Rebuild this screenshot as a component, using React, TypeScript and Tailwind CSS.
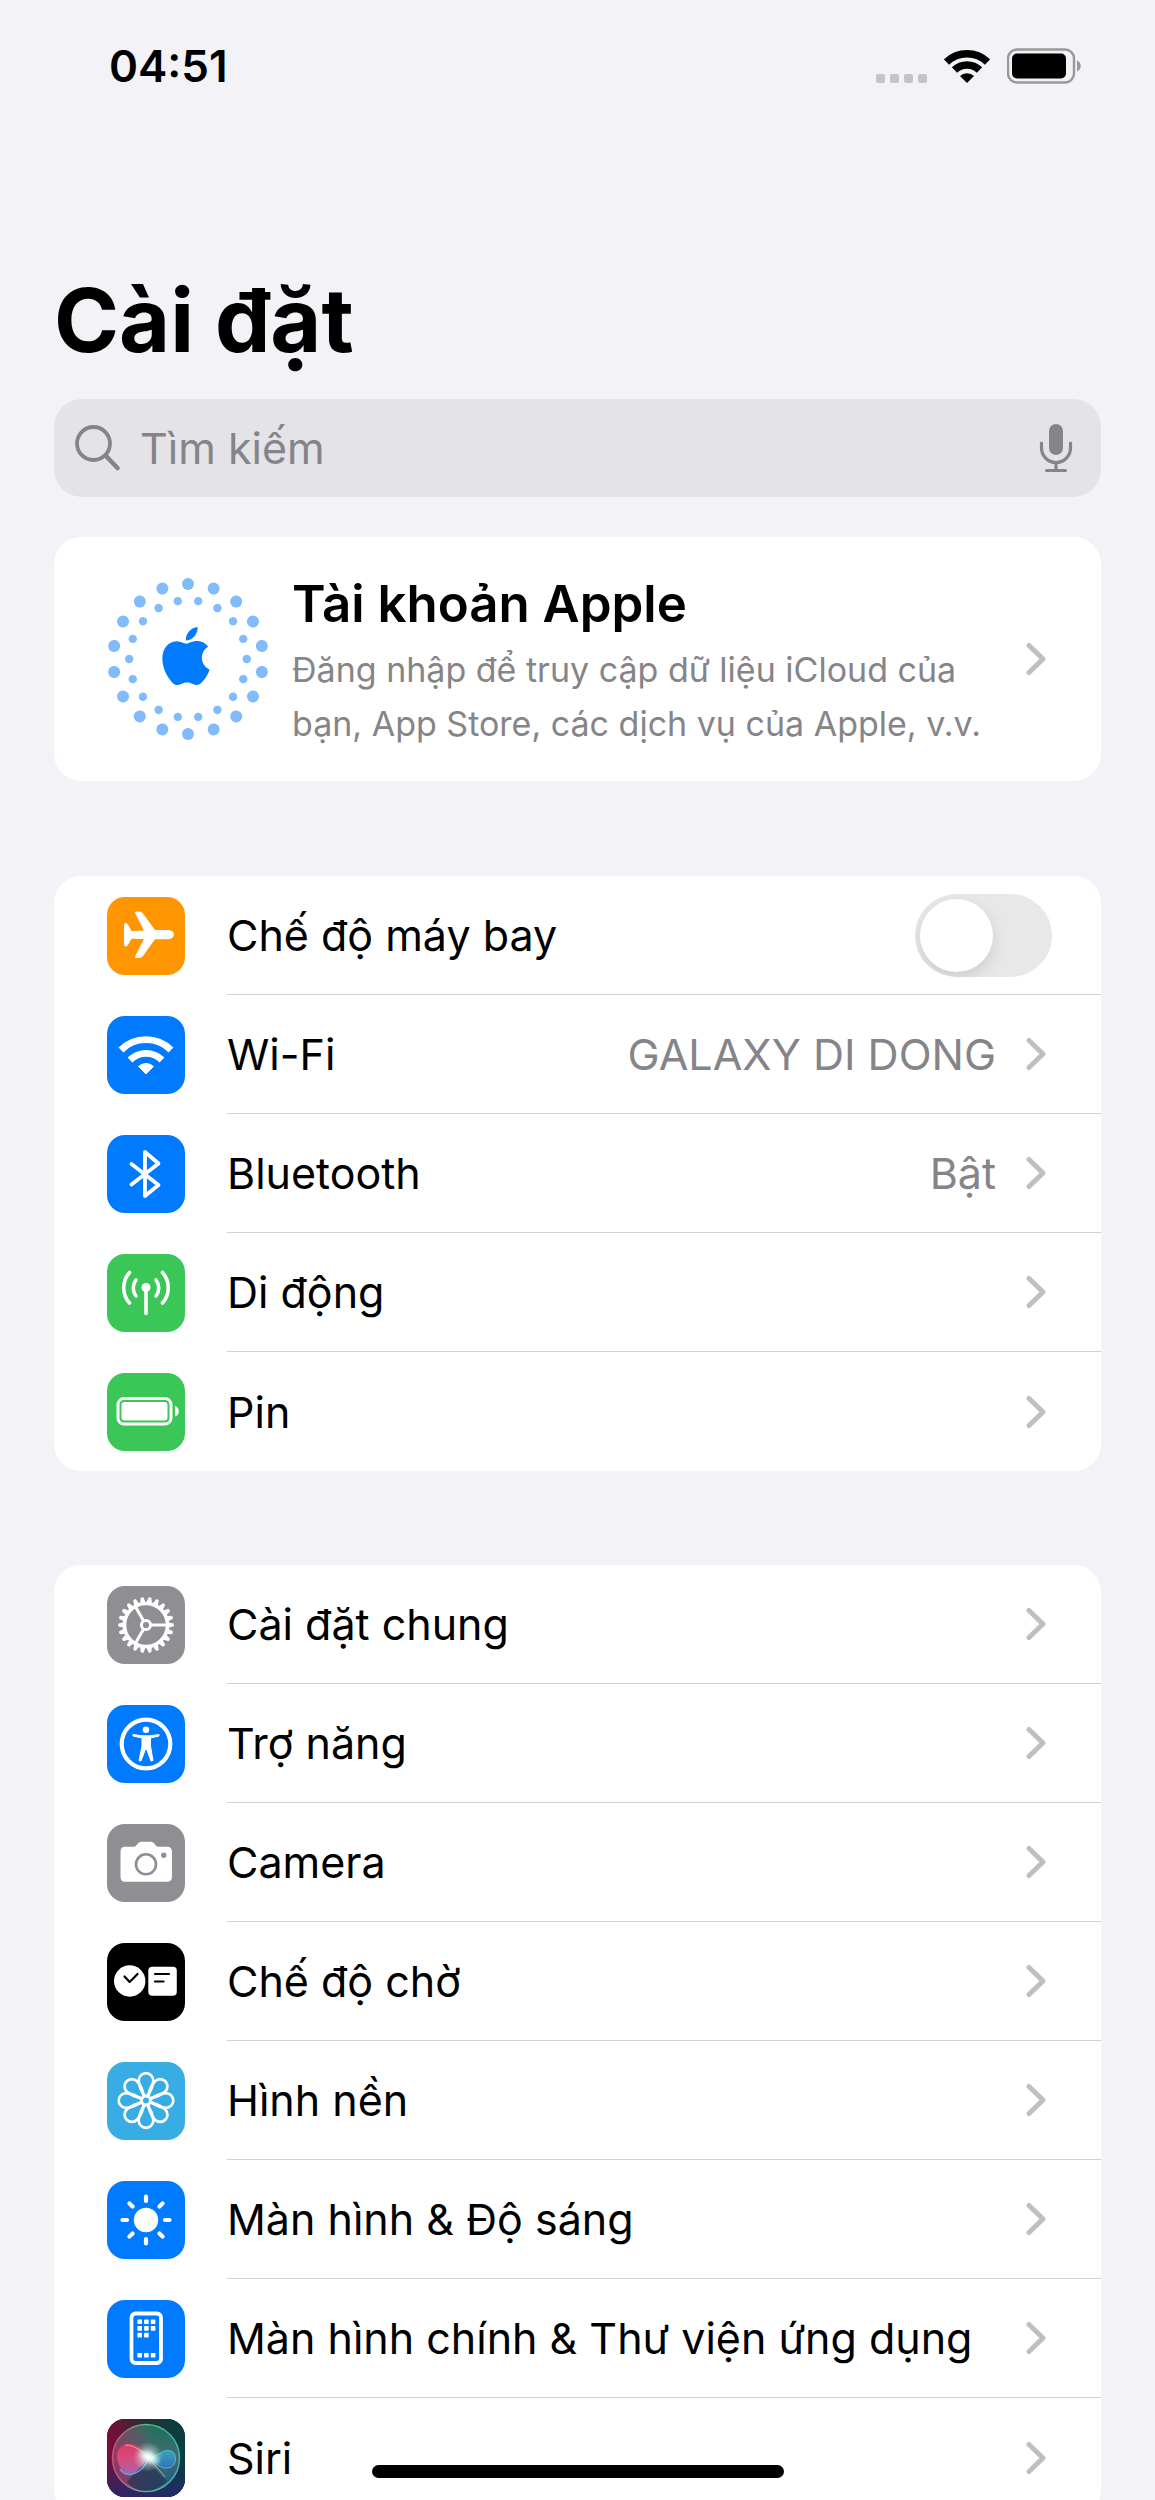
import { useState } from "react";
import type { ReactNode } from "react";
import { SiApple } from "react-icons/si";

type Item = {
  label: string;
  icon: ReactNode;
  color: string;
  value?: string;
  href: string;
};

const GEAR_TEETH = Array.from({ length: 22 }, (_, i) => (i * 360) / 22);
const PETALS = Array.from({ length: 8 }, (_, i) => i * 45);
const RING = Array.from({ length: 18 }, (_, i) => i * 20);

function Glyph({ children }: { children: ReactNode }) {
  return (
    <svg viewBox="0 0 78 78" className="size-full" fill="none" aria-hidden="true">
      {children}
    </svg>
  );
}

function PlaneIcon() {
  return (
    <Glyph>
      <path
        fill="#fff"
        d="M62 33H48L36 16.5Q34.500 14.500 32 14.500H29.500Q27.500 14.500 28.300 16.500L37 33.500L24.500 34L21 27.500Q20 26 18.500 26Q17 26 17 28V47.500Q17 49.500 18.500 49.500Q20 49.500 21 48L24.500 41.800L37 42L28.300 59Q27.500 61 29.500 61H32Q34.500 61 36 59L48 42.300H62Q67 41 67 37.600Q67 34 62 33Z"
      />
    </Glyph>
  );
}

function WifiIcon() {
  return (
    <Glyph>
      <g stroke="#fff" strokeWidth="6.8">
        <path d="M14 34A35.500 35.500 0 0 1 64 34" />
        <path d="M23 44A22.500 22.500 0 0 1 55 44" />
      </g>
      <path fill="#fff" stroke="#fff" strokeLinejoin="round" d="M39 58L31.500 50.500A11 11 0 0 1 46.500 50.500Z" />
    </Glyph>
  );
}

function BluetoothIcon() {
  return (
    <Glyph>
      <path
        stroke="#fff"
        strokeWidth="3.8"
        strokeLinecap="round"
        strokeLinejoin="round"
        d="M24.500 29L51.500 50L38 61V17L51.500 28.500L24.500 49.500"
      />
    </Glyph>
  );
}

function CellularIcon() {
  return (
    <Glyph>
      <g stroke="#fff" strokeWidth="3.6" strokeLinecap="round">
        <path d="M39 34V59.500" />
        <path d="M29 26A13 13 0 0 0 29 42" />
        <path d="M49 26A13 13 0 0 1 49 42" />
        <path d="M22.500 18.500A23 23 0 0 0 22.500 49" />
        <path d="M55.500 18.500A23 23 0 0 1 55.500 49" />
      </g>
      <circle cx="39" cy="33.500" r="4.500" fill="#fff" />
    </Glyph>
  );
}

function BatteryIcon() {
  return (
    <Glyph>
      <rect x="11" y="25.500" width="53" height="25.500" rx="6" stroke="#fff" strokeWidth="3" />
      <rect x="14.500" y="29" width="46" height="18.500" rx="3" fill="#fff" />
      <path fill="#fff" d="M68 33C73 34.500 73 42 68 43.500Z" />
    </Glyph>
  );
}

function GearIcon() {
  return (
    <Glyph>
      <g transform="translate(39 39)" stroke="#fff">
        {GEAR_TEETH.map((angle) => (
          <path key={angle} transform={`rotate(${angle})`} fill="#fff" stroke="none" d="M21 -3L27.500 -1.500Q28.500 0 27.500 1.500L21 3Z" />
        ))}
        <circle r="21.500" strokeWidth="3.600" />
        <circle r="4.600" strokeWidth="3" />
        {[0, 120, 240].map((angle) => (
          <path key={angle} transform={`rotate(${angle})`} strokeWidth="3" d="M5 0H21" />
        ))}
      </g>
    </Glyph>
  );
}

function AccessibilityIcon() {
  return (
    <Glyph>
      <circle cx="39" cy="39" r="24.300" stroke="#fff" strokeWidth="4.200" />
      <circle cx="39" cy="24.800" r="3.300" fill="#fff" />
      <path
        fill="#fff"
        stroke="#fff"
        strokeLinejoin="round"
        d="M26 29.500L35 30.800H43L52 29.500V31L43.500 33V41L46 55.500L44 56L39.500 44H38.500L34 56L32 55.500L35 41V33L26 31Z"
      />
    </Glyph>
  );
}

function CameraIcon() {
  return (
    <Glyph>
      <path
        fill="#fff"
        d="M18 22.700H27Q29 22.500 30 20.500Q31.500 17.700 34 17.700H44Q46.500 17.700 48 20.500Q49 22.500 51 22.700H60Q65 22.700 65 27.500V53Q65 57.700 60 57.700H18Q13.500 57.700 13.500 53V27.500Q13.500 22.700 18 22.700Z"
      />
      <circle cx="39" cy="40.300" r="10" stroke="#8e8e93" strokeWidth="2.600" />
      <circle cx="56.800" cy="31.300" r="2.700" fill="#8e8e93" />
    </Glyph>
  );
}

function StandbyIcon() {
  return (
    <Glyph>
      <circle cx="22.700" cy="38" r="15.700" fill="#fff" />
      <rect x="41.300" y="23.700" width="28.500" height="29" rx="4" fill="#fff" />
      <g stroke="#000" strokeWidth="2.200" strokeLinecap="round" strokeLinejoin="round">
        <path d="M17.500 33.500L22.700 39L30.500 31" />
        <path d="M48 31H62" />
        <path d="M48 38.500H56.500" />
      </g>
    </Glyph>
  );
}

function FlowerIcon() {
  return (
    <Glyph>
      <g transform="translate(39 38.500)" stroke="#fff" strokeWidth="2.700">
        {PETALS.map((angle) => (
          <path
            key={angle}
            transform={`rotate(${angle})`}
            d="M-1 -4.500C-4.500 -8 -7.300 -15 -7.300 -20A7.300 7.300 0 0 1 7.300 -20C7.300 -15 4.500 -8 1 -4.500"
          />
        ))}
        <circle r="4.300" />
      </g>
    </Glyph>
  );
}

function SunIcon() {
  return (
    <Glyph>
      <circle cx="39" cy="39" r="12.200" fill="#fff" />
      <g transform="translate(39 39)" stroke="#fff" strokeWidth="4.200" strokeLinecap="round">
        {PETALS.map((angle) => (
          <path key={angle} transform={`rotate(${angle})`} d="M0 -19V-23.500" />
        ))}
      </g>
    </Glyph>
  );
}

function HomeScreenIcon() {
  const cells = [
    [0, 0], [1, 0], [2, 0],
    [0, 1], [1, 1], [2, 1],
    [0, 2], [1, 2],
    [0, 5], [1, 5], [2, 5],
  ];
  return (
    <Glyph>
      <rect x="24.500" y="13.500" width="29.500" height="49.500" rx="4" stroke="#fff" strokeWidth="3.800" />
      {cells.map(([col, row]) => (
        <rect key={`${col}-${row}`} x={30.4 + col * 6.7} y={19.4 + row * 6.7} width="4.600" height="4.600" rx="0.600" fill="#fff" />
      ))}
    </Glyph>
  );
}

function SiriIcon() {
  return (
    <Glyph>
      <defs>
        <linearGradient id="siri-bg" x1="0" y1="0" x2="1" y2="0">
          <stop offset="0" stopColor="#7d0c3a" />
          <stop offset="0.500" stopColor="#233035" />
          <stop offset="1" stopColor="#063f42" />
        </linearGradient>
        <linearGradient id="siri-low" x1="0" y1="0" x2="0" y2="1">
          <stop offset="0.450" stopColor="#1b2a70" stopOpacity="0" />
          <stop offset="1" stopColor="#26286e" stopOpacity="0.850" />
        </linearGradient>
        <linearGradient id="siri-orb" x1="0" y1="0" x2="0" y2="1">
          <stop offset="0" stopColor="#1d7a5c" />
          <stop offset="0.500" stopColor="#4d7280" />
          <stop offset="1" stopColor="#175a8c" />
        </linearGradient>
        <linearGradient id="siri-warm" x1="0" y1="0.300" x2="1" y2="0">
          <stop offset="0" stopColor="#a5305f" stopOpacity="0.800" />
          <stop offset="0.450" stopColor="#6a5566" stopOpacity="0.500" />
          <stop offset="0.700" stopColor="#1d8a68" stopOpacity="0" />
        </linearGradient>
        <linearGradient id="siri-edge" x1="0" y1="0" x2="1" y2="0">
          <stop offset="0" stopColor="#c9527f" />
          <stop offset="0.500" stopColor="#5fb592" />
          <stop offset="1" stopColor="#43b3ae" />
        </linearGradient>
        <linearGradient id="siri-pink" x1="0" y1="0" x2="0" y2="1">
          <stop offset="0" stopColor="#e23a63" />
          <stop offset="0.550" stopColor="#dd4f86" />
          <stop offset="1" stopColor="#a969b4" />
        </linearGradient>
        <linearGradient id="siri-blue" x1="0" y1="0" x2="0" y2="1">
          <stop offset="0" stopColor="#35b4bd" />
          <stop offset="1" stopColor="#2f72cf" />
        </linearGradient>
        <radialGradient id="siri-glow">
          <stop offset="0" stopColor="#fff" />
          <stop offset="0.300" stopColor="#f4fffb" stopOpacity="0.800" />
          <stop offset="1" stopColor="#b6eedd" stopOpacity="0" />
        </radialGradient>
      </defs>
      <rect width="78" height="78" fill="url(#siri-bg)" />
      <rect width="78" height="78" fill="url(#siri-low)" />
      <circle cx="39" cy="39" r="33.500" fill="url(#siri-orb)" fillOpacity="0.850" />
      <circle cx="39" cy="39" r="33.500" fill="url(#siri-warm)" stroke="url(#siri-edge)" strokeWidth="1.500" />
      <path fill="#12304f" fillOpacity="0.600" d="M39 41L60 62Q50 72 39 72Q28 72 20 63Z" />
      <path fill="url(#siri-pink)" fillOpacity="0.900" d="M42 39C34 28 26 24 20 25C12 26 8 34 11 43C14 54 24 58 30 52C35 47 38 43 42 39Z" />
      <path
        fill="url(#siri-blue)"
        fillOpacity="0.800"
        stroke="#5fd3e6"
        strokeOpacity="0.700"
        d="M42 39C48 44 54 50 61 49C67 48 70 42 68 36C66 31 60 30 55 33C50 36 47 38 42 39Z"
      />
      <path stroke="#62a8e8" strokeWidth="1.500" d="M13 50C20 60 34 56 42 39" />
      <path stroke="#ffd4de" strokeOpacity="0.600" d="M18 26C28 26 36 33 42 39L58 58" />
      <ellipse cx="41" cy="38" rx="15" ry="15" fill="url(#siri-glow)" fillOpacity="0.800" />
      <ellipse cx="42" cy="38" rx="13" ry="7" transform="rotate(25 42 38)" fill="url(#siri-glow)" />
    </Glyph>
  );
}

function Chevron() {
  return (
    <svg viewBox="0 0 20 34" className="h-[34px] w-5 shrink-0" fill="none" aria-hidden="true">
      <path d="M3 3.500L17 17L3 30.500" stroke="#bfbfc1" strokeWidth="5" strokeLinecap="round" strokeLinejoin="round" />
    </svg>
  );
}

function AccountBadge() {
  return (
    <svg viewBox="-81 -81 162 162" className="size-[162px] shrink-0" fill="#82bbfb" aria-hidden="true">
      {RING.map((angle) => (
        <g key={angle}>
          <circle cy="-75" r="6" transform={`rotate(${angle})`} />
          <circle cy="-58.800" r="4.200" transform={`rotate(${angle + 10})`} />
        </g>
      ))}
      <SiApple x={-31} y={-32} size={58} color="#007aff" />
    </svg>
  );
}

function IconTile({ color, children }: { color: string; children: ReactNode }) {
  return <span className={`size-[78px] shrink-0 overflow-hidden rounded-[18px] ${color}`}>{children}</span>;
}

function LinkRow({ item }: { item: Item }) {
  return (
    <li className="group">
      <a href={item.href} className="flex h-[119px] items-center gap-[42px] pl-[53px]">
        <IconTile color={item.color}>{item.icon}</IconTile>
        <span className="flex h-full min-w-0 flex-1 items-center border-b border-[#d2d2d5] pr-[55px] group-last:border-b-0">
          <span className="flex-1 whitespace-nowrap">{item.label}</span>
          {item.value && <span className="mr-[30px] text-[#858589]">{item.value}</span>}
          <Chevron />
        </span>
      </a>
    </li>
  );
}

function StatusBar() {
  return (
    <div className="flex h-[131px] items-center justify-between pr-[73px] pl-[109px]">
      <span className="text-[44px] font-semibold">04:51</span>
      <div className="flex items-center gap-[17px]">
        <div className="flex gap-[5px] self-end pb-px">
          <span className="size-[9px] rounded-xs bg-[#c4c4c8]" />
          <span className="size-[9px] rounded-xs bg-[#c4c4c8]" />
          <span className="size-[9px] rounded-xs bg-[#c4c4c8]" />
          <span className="size-[9px] rounded-xs bg-[#c4c4c8]" />
        </div>
        <svg viewBox="0 0 46 34" className="h-[34px] w-[46px]" fill="none" aria-hidden="true">
          <g stroke="#000" strokeWidth="7.600">
            <path d="M2.500 13A29.500 29.500 0 0 1 43.500 13" />
            <path d="M10.500 21A18 18 0 0 1 35.500 21" />
          </g>
          <path d="M23 34L16 27A10 10 0 0 1 30 27Z" fill="#000" />
        </svg>
        <svg viewBox="0 0 75 36" className="h-9 w-[75px]" fill="none" aria-hidden="true">
          <rect x="1" y="1.500" width="66" height="33" rx="9" stroke="#98989d" strokeWidth="2.400" />
          <rect x="5" y="5.500" width="54" height="25" rx="5" fill="#000" />
          <path d="M70 12.500C75 14.500 75 21.500 70 23.500Z" fill="#98989d" />
        </svg>
      </div>
    </div>
  );
}

const connectivity: Item[] = [
  { label: "Wi-Fi", icon: <WifiIcon />, color: "bg-[#007aff]", value: "GALAXY DI DONG", href: "#wifi" },
  { label: "Bluetooth", icon: <BluetoothIcon />, color: "bg-[#007aff]", value: "Bật", href: "#bluetooth" },
  { label: "Di động", icon: <CellularIcon />, color: "bg-[#3bc757]", href: "#cellular" },
  { label: "Pin", icon: <BatteryIcon />, color: "bg-[#3bc757]", href: "#battery" },
];

const general: Item[] = [
  { label: "Cài đặt chung", icon: <GearIcon />, color: "bg-[#8e8e93]", href: "#general" },
  { label: "Trợ năng", icon: <AccessibilityIcon />, color: "bg-[#007aff]", href: "#accessibility" },
  { label: "Camera", icon: <CameraIcon />, color: "bg-[#8e8e93]", href: "#camera" },
  { label: "Chế độ chờ", icon: <StandbyIcon />, color: "bg-black", href: "#standby" },
  { label: "Hình nền", icon: <FlowerIcon />, color: "bg-[#38ade3]", href: "#wallpaper" },
  { label: "Màn hình & Độ sáng", icon: <SunIcon />, color: "bg-[#007aff]", href: "#display" },
  { label: "Màn hình chính & Thư viện ứng dụng", icon: <HomeScreenIcon />, color: "bg-[#007aff]", href: "#home-screen" },
  { label: "Siri", icon: <SiriIcon />, color: "bg-black", href: "#siri" },
];

export default function App() {
  const [airplane, setAirplane] = useState(false);
  const [query, setQuery] = useState("");

  return (
    <div className="h-screen overflow-hidden bg-[#f2f2f7] font-[Inter,'Liberation_Sans',sans-serif] text-[43px] leading-[54px] text-black">
      <StatusBar />

      <main className="px-[54px]">
        <h1 className="pt-[134px] text-[88px] leading-[110px] font-bold">Cài đặt</h1>

        {/* Search */}
        <div className="mt-[24px] flex h-[98px] items-center rounded-[28px] bg-[#e3e3e8] pr-[28px] pl-[20px] text-[#858589]">
          <svg viewBox="0 0 48 48" className="size-12 shrink-0" fill="none" stroke="currentColor" strokeLinecap="round" aria-hidden="true">
            <circle cx="19.500" cy="19.500" r="16.500" strokeWidth="3.800" />
            <path d="M32 32L43.500 44" strokeWidth="4.600" />
          </svg>
          <input
            type="search"
            aria-label="Tìm kiếm"
            placeholder="Tìm kiếm"
            value={query}
            onChange={(e) => setQuery(e.target.value)}
            className="ml-[18px] min-w-0 flex-1 bg-transparent outline-none placeholder:text-[#858589]"
          />
          <button type="button" aria-label="Đọc chính tả">
            <svg viewBox="0 0 34 50" className="h-[50px] w-[34px]" fill="none" stroke="currentColor" strokeLinecap="round" aria-hidden="true">
              <rect x="10" y="1" width="14" height="31" rx="7" fill="currentColor" stroke="none" />
              <path d="M2.500 20V25A14.500 14.500 0 0 0 31.500 25V20M17 39.500V47M7.500 47.500H26.500" strokeWidth="3.200" />
            </svg>
          </button>
        </div>

        {/* Account */}
        <a href="#account" className="mt-10 flex h-[244px] items-center rounded-[27px] bg-white pr-[55px] pl-[53px]">
          <AccountBadge />
          <span className="ml-[23px] flex flex-1 flex-col gap-[6px] pt-1 whitespace-nowrap">
            <span className="text-[51px] leading-[66px] font-semibold">Tài khoản Apple</span>
            <span className="text-[34px] text-[#858589]">
              Đăng nhập để truy cập dữ liệu iCloud của
              <br />
              bạn, App Store, các dịch vụ của Apple, v.v.
            </span>
          </span>
          <Chevron />
        </a>

        {/* Connectivity */}
        <ul className="mt-[95px] rounded-[27px] bg-white">
          <li className="flex h-[119px] items-center gap-[42px] pl-[53px]">
            <IconTile color="bg-[#ff9500]">
              <PlaneIcon />
            </IconTile>
            <label className="flex h-full flex-1 items-center justify-between border-b border-[#d2d2d5] pr-[49px]">
              Chế độ máy bay
              <input
                type="checkbox"
                role="switch"
                checked={airplane}
                onChange={(e) => setAirplane(e.target.checked)}
                className="flex h-[83px] w-[137px] appearance-none items-center rounded-full bg-[#e8e8e9] px-[5px] before:size-[73px] before:rounded-full before:bg-white before:shadow-[0_6px_16px_rgba(0,0,0,0.12)] checked:justify-end checked:bg-[#34c759] overflow-hidden"
              />
            </label>
          </li>
          {connectivity.map((item) => (
            <LinkRow key={item.href} item={item} />
          ))}
        </ul>

        {/* General */}
        <ul className="mt-[94px] rounded-[27px] bg-white">
          {general.map((item) => (
            <LinkRow key={item.href} item={item} />
          ))}
        </ul>
      </main>

      {/* Home indicator */}
      <div className="fixed bottom-[22px] left-1/2 h-[13px] w-[412px] -translate-x-1/2 rounded-full bg-black" />
    </div>
  );
}
